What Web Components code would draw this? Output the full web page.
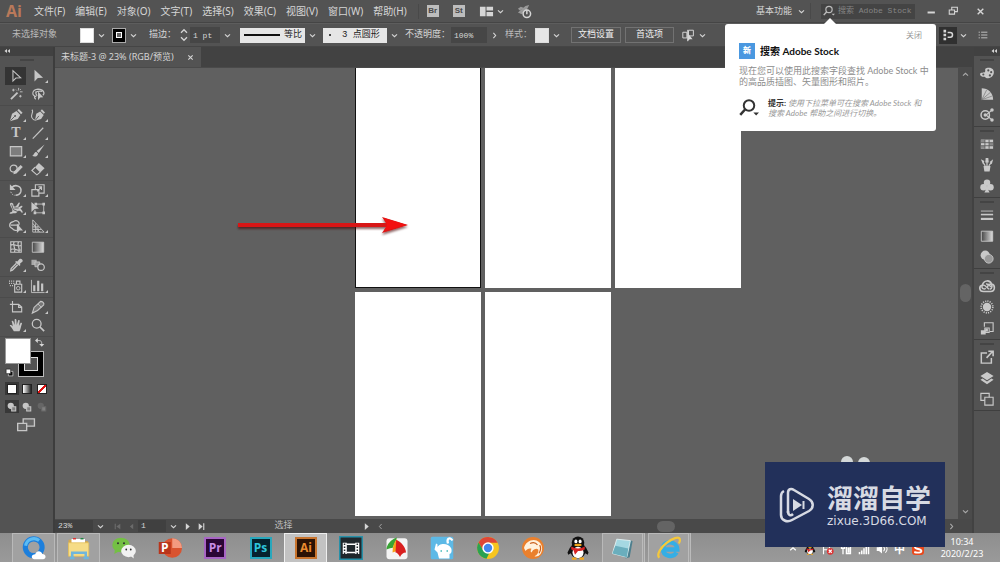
<!DOCTYPE html>
<html lang="zh-CN">
<head>
<meta charset="utf-8">
<title>未标题-3 @ 23% (RGB/预览)</title>
<style>
html,body{margin:0;height:100%;overflow:hidden;background:#535353}
body{font:10px/14px "Noto Sans","Noto Sans CJK SC",sans-serif;color:#d6d6d6}
</style>
</head>
<body>
<ai-workspace></ai-workspace>
<script>
const BASE = `
*{box-sizing:border-box}
button,select,input{font:inherit;color:inherit;border:0;background:none;padding:0;margin:0;border-radius:0;appearance:none;outline:0;min-width:0}
button{display:flex;align-items:center;justify-content:center;flex:none}
a{color:inherit;text-decoration:none}
`;
function define(name, css, html) {
  const t = document.createElement('template');
  t.innerHTML = `<style>${BASE}${css}</style>${html}`;
  customElements.define(name, class extends HTMLElement {
    constructor() {
      super();
      this.attachShadow({mode: 'open'}).append(t.content.cloneNode(true));
    }
  });
}

/* 16 x 16 glyphs; S = stroked */
const S = 'fill="none" stroke="currentColor"';
const ICONS = {
  down: `<path ${S} stroke-width="2" d="M3.500 6l4.500 4 4.500-4"/>`,
  right: `<path ${S} stroke-width="2" d="M6 3.500l4 4.500-4 4.500"/>`,
  left: `<path ${S} stroke-width="1.600" d="M10 3.500l-4 4.500 4 4.500"/>`,
  up: `<path ${S} stroke-width="2" d="M3.500 10l4.500-4 4.500 4"/>`,
  stepper: `<path ${S} stroke-width="1.700" d="M4 5l4-4 4 4M4 11l4 4 4-4"/>`,
  collapse: `<path d="M8 4v8L3 8zM14 4v8L9 8z"/>`,
  select: `<path ${S} stroke-width="1.200" d="M4.500 1.800v12l3.400-3.400 5.500-.4z"/>`,
  direct: `<path d="M4 .8v13.500l3.800-4.100 6-.2z"/>`,
  wand: `<path d="M1.500 13.200L9 5.700l1.500 1.500L3 14.700z"/><path ${S} d="M11 1v3M12.500 5.500h3M5 2v3M3.500 3.500h3M13 9v3M11.500 10.500h3M8 3l1 1M13.500 2.500l-1 1"/>`,
  lasso: `<path ${S} stroke-width="1.300" d="M6 11C0 10 1 3 8 2.500c7 0 8 5 5.500 7M5 6.500c2-2 5-2 8-1.500M4.500 10c-1 2-.5 3 1 4M6 5c-1 2 0 4 1 5"/><path d="M8 5v10l2.500-3 3.500-.3z"/>`,
  pen: `<path d="M1 15L3.500 6.500l5-3 4.500 4.500L10 12.500z"/><path d="M9.500 2.700l1.700-1.700L15.500 5.300 13.800 7z"/><path d="M1.500 14.500l5-5" stroke="#535353"/><circle cx="7" cy="9" r="1.100" fill="#535353"/>`,
  curve: `<path d="M4.500 14.500L6 6.500l4.500-2.500 4 4-3 4.500z"/><path d="M11 3l1.500-1.500L16 5l-1.500 1.500z"/><path ${S} stroke-width="1.200" d="M1 2c3 2-2 6 0 9 1 2 2 3 4 3"/><path d="M5 14l4-5" stroke="#535353"/>`,
  type: `<text x="8" y="13" text-anchor="middle" font-family="Liberation Serif" font-weight="bold" font-size="16">T</text>`,
  line: `<path ${S} stroke-width="1.300" d="M2 14.500L14 2"/>`,
  rect: `<path fill="#7d7d7d" stroke="currentColor" stroke-width="1.300" d="M1.500 3h13v10.500h-13z"/>`,
  brush: `<path d="M15.500.5L6.500 8l2.300 2.300zM6.200 9c-3 0-2 3-5 4.500 3 1.500 6 1 7-2.500z"/>`,
  shaper: `<circle ${S} stroke-width="1.400" cx="5.300" cy="7.500" r="4"/><path d="M5 14l1-3.500L13.300 3.500l2.400 2.300L8.500 13z"/>`,
  eraser: `<path d="M9 1L15.500 7l-5 5L4.500 6z"/><path ${S} stroke-width="1.300" d="M4.700 6L1 9.700l5.700 5 3.800-3.200"/>`,
  rotate: `<path ${S} stroke-width="1.700" d="M3 5.500C7 .5 15 4 13.500 10c-1 3-3 4-6 4"/><path d="M1 1.500V8h6.500z"/><path ${S} stroke-dasharray="1.500 1.500" d="M2 10c1 3 3 4 5 4"/>`,
  scale: `<path ${S} stroke-width="1.300" d="M1 7.500h8V15H1zM5 7V2h10v9.500H9.500M7 9.500l5-5M8.500 4.500H12V8"/>`,
  warp: `<path d="M1 3c1-2 4-1 4 1s1 3 3 2l3-4c1-1 2 0 1 1.500L10.500 7c2 0 3-2 4.500-1.500 1 .5 0 2-2 3 2 2 3 3 2.500 5-1 .5-2-2.500-4-2.500-2 0-2 3-5 3-3 0-4 1-5.500.5-1-.5 0-2 2-2 1-.5 1-2 .5-3.500C3 7 1 5 1 3z"/><path d="M3 4l2 6 5 2M6 8l5 0" fill="none" stroke="#535353"/>`,
  free: `<path d="M.5 1v11.500l3.500-3.500 5-.4z"/><path ${S} d="M5 3.500h9.500v10H4.500V10"/><path d="M4 2h3v3H4zM13 2h3v3h-3zM13 12h3v3h-3zM3 12h3v3H3z"/>`,
  builder: `<path ${S} stroke-width="1.300" d="M5 3c4-3 8 1 6 4s2 3 0 5-6 1-7-1C-1 9 0 4 5 3zM2 7h8"/><path d="M9 5v11l3-3h4z"/>`,
  persp: `<path ${S} d="M2 1v14h13zM2 5l8 10M2 9h6M5 5v10M2 12h10M8 8v7"/>`,
  mesh: `<path ${S} stroke-width="1.300" d="M2 2h12v12H2zM2 6c4-3 8 3 12 0M2 11c4-3 8 3 12 0M6 2c-3 4 3 8 0 12M11 2c-3 4 3 8 0 12"/>`,
  gradient: `<path fill="url(#g)" stroke="currentColor" d="M1.500 2.500h13v11.500h-13z"/>`,
  dropper: `<path d="M9.500 4l2.500-3c2-1 4.500 1 3.500 3l-3 2.500 .5 1.500-1 1L7 4.500l1-1z"/><path ${S} stroke-width="1.500" d="M8.500 6L2.500 12 2 14.500l2-.7L10 7.800"/>`,
  blend: `<path fill="#aaa" d="M.5 2h6v6h-6z"/><path fill="#999" stroke="currentColor" d="M4.500 4.500h5.500v5.500H4.500z"/><circle cx="11.500" cy="10.500" r="3.700" fill="#535353" stroke="currentColor" stroke-width="1.400"/>`,
  spray: `<path ${S} stroke-width="1.300" d="M6.500 6h8v9h-8zM8.500 6V2.500h4V6"/><circle ${S} cx="10.500" cy="10.500" r="2"/><path ${S} stroke-dasharray="1.200 1.200" stroke-width="1.500" d="M0 2.500h7M0 5h6M1 7.500h4"/>`,
  graph: `<path d="M2.500 7h2.500v7H2.500zM7 2h2.500v12H7zM11.500 5H14v9h-2.500z"/><path ${S} d="M.5 1v14.500h15"/>`,
  artboard: `<path ${S} stroke-width="1.300" d="M4 1v12.500h10.500V8L11 5H1M11 5v3.500h3.500"/>`,
  slice: `<path fill="#777" stroke="currentColor" stroke-width="1.300" d="M1.500 15l2-6.500L11 1.500c2 0 4.500 2 3.500 4L7.500 12z"/><path ${S} d="M8 4.500l4 4"/>`,
  hand: `<path d="M5.500 15C4 12 2 10 .8 8.500c1-1 2.500-.3 3.700 1.200L3 3.500c1-.8 1.800-.2 2.200.8L6.500 8 6.500 1.500c1-.8 1.900-.3 2 .8L8.800 8l1.700-5.500c1-.5 1.900.2 1.700 1L11.300 9l2-3.500c1-.4 1.800.3 1.500 1.200C13.500 10 13.500 13 12 15z"/>`,
  zoom: `<circle ${S} stroke-width="1.500" cx="6.500" cy="6.500" r="5"/><path ${S} stroke-width="2" d="M10 10l5 5"/>`,
  swap: `<path ${S} stroke-width="1.500" d="M4 4.500h3c4 0 5 2 5 6"/><path d="M0 4.500L5 0v9zM12 15.500L7.500 10.500h9z"/>`,
  defaults: `<path fill="#111" stroke="#fff" d="M6 6h8v8H6z"/><path fill="#fff" stroke="#111" d="M2 2h8v8H2z"/>`,
  mode: `<circle cx="6" cy="6" r="5"/><path fill="#808080" stroke="currentColor" stroke-width="1.700" d="M7.500 7.500H14V14.500H7.500z"/>`,
  screens: `<path fill="#666" stroke="currentColor" stroke-width="1.200" d="M5.500 2.500h10V9h-10z"/><path fill="#666" stroke="currentColor" stroke-width="1.200" d="M.6 6.500h8V13h-8z"/>`,
  palette: `<path d="M7 2.500c6-2 9.500 1.500 8.800 5.500S12 14 8 14c-2 0-1.500-1.500-3-1.700C2 12.500 0 11 0 9c.3-2 5-1 5.800-2.500.8-1.200-.8-3 1.200-4z"/><g fill="#535353"><circle cx="9.500" cy="5" r="1.200"/><circle cx="12.800" cy="7" r="1.200"/><circle cx="11.300" cy="10.800" r="1.300"/><circle cx="3.800" cy="9.700" r="1.200"/></g>`,
  guide: `<path d="M2 1.500c7 0 13 5 13 13H2z"/><path d="M2 14.500L12 6M2 14.500L7.500 3.500M2 14.500l11.500-4" stroke="#777" stroke-width=".8"/>`,
  themes: `<circle ${S} stroke-width="1.700" cx="6" cy="8" r="4.800"/><circle cx="6" cy="8" r="1.900"/><path ${S} stroke-width="1.300" d="M7 8l6-5M7 8l6 5"/><circle cx="13.700" cy="2.300" r="2"/><circle cx="13.700" cy="13.700" r="2"/>`,
  swatches: `<path d="M1 3h14v10.500H1z"/><path fill="#8b8b8b" d="M1 3h4.500v3.500H1zM10.500 6.500H15V10h-4.500zM1 10h4.500v3.500H1z"/><path fill="none" stroke="#5b5b5b" d="M1 6.500h14M1 10h14M5.600 3v10.500M10.400 3v10.500"/>`,
  brushes: `<path d="M4 9h8L11 15.500H5z"/><path ${S} stroke-width="1.400" d="M6 9L3.500 5M8 9V4M10 9l3-4"/><path d="M1 1.500l4 2-1.500 3.500zM6.500 0h3l.5 5H6zM15 1.500L11 4.500l2.500 2.500z"/>`,
  club: `<circle cx="8" cy="4.300" r="3.700"/><circle cx="4" cy="9.300" r="3.700"/><circle cx="12" cy="9.300" r="3.700"/><path d="M7 8h2c0 3 .5 5 2 7.500H5c1.500-2.500 2-4.500 2-7.500z"/>`,
  strokes: `<path ${S} d="M1 3.500h14"/><path ${S} stroke-width="1.800" d="M1 7.500h14"/><path ${S} stroke-width="2.500" d="M1 12.500h14"/>`,
  transp: `<circle cx="6" cy="6" r="5.300"/><circle cx="10" cy="10" r="5" fill="#999" stroke="currentColor"/>`,
  cloud: `<path ${S} stroke-width="1.600" d="M4.500 13.500C0 13.500-.5 8 3.500 7 4.500 2 11 1.500 12.500 6c4 .8 4 7.500-1 7.500z"/><path ${S} stroke-width="1.400" d="M10 11.300L5.800 7.500C4 6.500 2.500 8 3 9.500s2.500 2 3.700.7M7 6c2-.5 3 1 5 3M9 9.300c-1-1.500.5-3.300 2.200-3 2.500.5 2.500 4.500-.5 5"/>`,
  sun: `<circle cx="8" cy="8" r="4.800"/><circle ${S} stroke-width="1.800" stroke-dasharray="1.300 1.300" cx="8" cy="8" r="6.700"/>`,
  asset: `<path ${S} stroke-width="1.300" d="M5 6.500V2h10v10h-4"/><path ${S} stroke-width="1.200" d="M5.500 8h5v5h-5z"/><path d="M1 10.500h5.500v5H1zM6 8.500h3V12H6z"/>`,
  share: `<path ${S} stroke-width="1.700" d="M8 3.500H1.500V15H13V9"/><path ${S} stroke-width="1.800" d="M7.500 9L14 2M9.500 1.500h5.500V7"/>`,
  layers: `<path d="M8 1L15.500 5.700 8 10.500.500 5.700z"/><path d="M3 8.500L.500 10 8 15l7.500-5L13 8.500 8 12z"/>`,
  boards: `<path ${S} stroke-width="1.300" d="M1 1.500h9.500v8H1z"/><path fill="#535353" stroke="currentColor" stroke-width="1.300" d="M5.500 6H15v9H5.500z"/>`,
  arrange: `<path d="M1 3h6v10H1zM8 3h7v4H8zM8 8.500h7v4.500H8z"/>`,
  rocket: `<path fill="#999" d="M1 9L9 2l4-1-2 4-6 6zM1 5l3-2 3 1-4 3z"/><circle ${S} stroke-width="1.600" cx="10.500" cy="10.500" r="4"/><path ${S} stroke-width="1.600" d="M10.500 6v5"/>`,
  find: `<circle ${S} stroke-width="1.600" cx="8" cy="6" r="4.200"/><path ${S} stroke-width="2" d="M5 9l-4 4.500"/><path d="M11.500 11.500H16L13.700 14z"/>`,
  min: `<path d="M1 8h13v3.500H1z"/>`,
  restore: `<path ${S} stroke-width="1.700" d="M6 6V2h9v7h-4M2 6.500h8.500V13H2z"/>`,
  close: `<path ${S} stroke-width="2.500" d="M3 3l10 10M13 3L3 13"/>`,
  align: `<path ${S} stroke-width="1.200" d="M1 4h5v7H1zM8 1.500h6v7H8zM7 1v14"/><path d="M7 5v10l2.500-2.500H13z"/>`,
  snap: `<path d="M2 1h3.500v3.500H2zM2 6.300h3.500v3.500H2zM2 11.500h3.500V15H2z"/><path ${S} stroke-width="2" d="M7.500 4.500H11c4 0 4 6.500 0 6.500H7.500"/>`,
  list: `<path ${S} stroke-width="1.300" d="M5 3.500h10M5 8h10M5 12.500h10M1 3.500h2M1 8h2M1 12.500h2"/>`,
  first: `<path d="M3 3h2v10H3zM13 3v10L6 8z"/>`,
  prev: `<path d="M11 3v10L5 8z"/>`,
  next: `<path d="M5 2v12l7-6z"/>`,
  last: `<path d="M3 2v12l7-6zM11 2h2v12h-2z"/>`,

  qqb: `<circle cx="7.800" cy="7.500" r="5.600" fill="none" stroke="#1d7fdc" stroke-width="3.400"/><path fill="none" stroke="#5cbcf4" stroke-width="2" d="M2.400 6.500a5.600 5.600 0 0 1 9-3.500"/><path fill="#fff" d="M8 15.500c-2.300-.5-1.800-3.300.8-3.300.7-2.700 4-2.700 4.700-.2 2.700 0 3 3.200.5 3.500z"/>`,
  folder: `<path fill="#d8a94a" d="M1 2.500h5l1 1h7v9H1z"/><path fill="#fff" d="M3 2h9v4H3z"/><path fill="#f6dc86" stroke="#e3bd5a" stroke-width=".5" d="M1 4.500h13.500v9H1z"/><path fill="none" stroke="#6fb6dc" stroke-width="1.700" d="M3.500 14.500v-3.300h9v3.300M2 14.700h3M11 14.700h3.500"/><path stroke="#d33" d="M4 1.800h2"/><path stroke="#284" d="M9 1.800h2"/>`,
  wechat: `<ellipse cx="6" cy="6" rx="5.800" ry="4.900" fill="#74c044"/><path fill="#74c044" d="M2 9l-.5 3L5 10z"/><ellipse cx="11" cy="10" rx="4.900" ry="4.100" fill="#f2f2f2"/><path fill="#f2f2f2" d="M12 13l2.500 2-.3-3z"/><g fill="#333"><circle cx="4" cy="4.800" r=".7"/><circle cx="8" cy="4.800" r=".7"/><circle cx="9.500" cy="9" r=".6"/><circle cx="12.500" cy="9" r=".6"/></g>`,
  ppt: `<circle cx="9.500" cy="8" r="6.500" fill="#d9532f"/><path fill="#f39a80" d="M9.500 1.500A6.500 6.500 0 0 1 16 8H9.500z"/><path fill="#b9351b" d="M.5 4h8v8h-8z"/><text x="4.500" y="10.800" text-anchor="middle" font-family="Open Sans" font-weight="bold" font-size="8" fill="#fff">P</text>`,
  film: `<path fill="#20272c" stroke="#2690a8" d="M.5.5h15v15H.500z"/><path fill="#fff" d="M2.500 4.500h2.700v7.500H2.500zM10.800 4.500h2.700v7.500h-2.700z"/><path fill="none" stroke="#fff" d="M5 5.500h6M5 11h6"/><path fill="none" stroke="#20272c" stroke-dasharray="1 1" d="M3.700 5v7M12.200 5v7"/>`,
  fan: `<rect x="1" y="1.500" width="14" height="14" rx="2" fill="#f4f4f4"/><path fill="#39a435" d="M8 1C4 2 1 6 1 9c2-1 3-1 4-1 1-2 2-4 3-7z"/><path fill="#f7a219" d="M8 2C6 4 5 7 5 11l3-1z"/><path fill="#d91f1f" d="M7.500 2.500C11 4 14 8 14 11c-2 0-3 1-4 3-1-2-2-3-3-3z"/>`,
  rabbit: `<rect x=".5" y=".5" width="15" height="15" rx="1" fill="#5db9e6"/><path fill="#fff" d="M5 8c0-3 7-4 9 0 1 2 0 4-1 4v3H6l-1-4-2-2 1-4 1 .5z"/><path fill="none" stroke="#fff" stroke-width="1.500" d="M12 5c-1-3 1-5 3-2"/><path stroke="#4bb" d="M7 10h1M11 10h1"/>`,
  chrome: `<circle cx="8" cy="8" r="7.300" fill="#f7c51e"/><path fill="#de4637" d="M1.700 4.300a7.300 7.300 0 0 1 12.700.2H8L5 10z"/><path fill="#2aa152" d="M1.700 4.300l3.500 6L9 11l-2 4.200A7.300 7.300 0 0 1 1.700 4.300z"/><circle cx="8" cy="8" r="3.300" fill="#4386ef" stroke="#fff"/>`,
  lion: `<circle cx="8" cy="8" r="7.300" fill="#ea802d"/><path fill="#fff1dd" d="M2 8C3 3 9 1 12 4c2 1.500 3 5 1 8-1 1.500-3 2-4 1.500 2-1 3-3 2.500-4.500C10 8 9 9 8 9.500L7 11c-1-.5-.5-1.500 0-2.500C5 8 4 9 3 10z"/><path fill="none" stroke="#c9601f" stroke-width=".8" d="M6 5c2-1 4-.5 5 1M12.500 6c1 2 .5 4-.5 5.500"/>`,
  qq: `<ellipse cx="8" cy="9.500" rx="5.300" ry="5.500" fill="#111"/><circle cx="8" cy="4.500" r="4.200" fill="#111"/><ellipse cx="8" cy="11" rx="3.700" ry="3.800" fill="#fff"/><path fill="#111" d="M3 7l-2 4 .5 1.500L4 11zM13 7l2 4-.5 1.500L12 11z"/><path fill="#d72323" d="M3.500 7c3 1.700 6 1.700 9 0v2c-1.500.7-3 1-4.500 1l-2 2.500-1-3-1.500-.5z"/><ellipse cx="6.600" cy="3.600" rx="1" ry="1.300" fill="#fff"/><ellipse cx="9.400" cy="3.600" rx="1" ry="1.300" fill="#fff"/><ellipse cx="8" cy="6" rx="2.500" ry=".8" fill="#f4a81b"/><path stroke="#f4a81b" stroke-width="1.500" d="M4 15h3M9 15h3"/>`,
  note: `<path fill="#4d7f8e" d="M13 2l2 1-2 11-3 1z"/><path fill="#a5d8e2" stroke="#e6f3f5" stroke-width=".6" d="M4 1.500l9.500 1L11 14 1 11.500z"/><path fill="#6aaebd" d="M3 6l9 2-1 6-10-2.500z"/>`,
  ie: `<path fill="none" stroke="#35aee5" stroke-width="3" d="M4 9h9.500c0-6-9.500-6.500-9.500-.5 0 5.500 7 6 9 2.500"/><path fill="none" stroke="#f5c83b" stroke-width="1.500" d="M1.500 14.500c-2-2 1-7 5-10 4-3 8-4.300 8.700-2.500.3 1 0 2-.6 3"/>`,
  flag: `<path stroke="#fff" stroke-width="1.500" fill="none" d="M2 1v14M2 3h8v6H2"/><circle cx="11" cy="11" r="4.500" fill="#d33"/><path stroke="#fff" stroke-width="1.500" d="M9 9l4 4M13 9l-4 4"/>`,
  power: `<path fill="none" stroke="#fff" stroke-width="1.700" d="M2 2v5h4V2M4 7v8M8.500 3.500H14V14H8.500z"/><path fill="#fff" d="M10 6h3v7h-3z"/>`,
  signal: `<path fill="#fff" d="M1 12h2v3H1zM4 10h2v5H4zM7 7h2v8H7zM10 4h2v11h-2zM13 1h2v14h-2z"/>`,
  sound: `<path fill="#fff" d="M1 5.500h3L8 2v12L4 10.500H1z"/><path fill="none" stroke="#fff" stroke-width="1.400" d="M10 5c2 2 2 4 0 6M12.500 3c3 3 3 7 0 10"/>`,
  sogou: `<rect width="16" height="16" rx="4" fill="#e8481c"/><path fill="none" stroke="#fff" stroke-width="2.500" d="M13 4C9 2 4 3 4 5.500S12.500 8 12.500 10.500 7 13.500 3 12"/>`
};
customElements.define('ai-icon', class extends HTMLElement {
  constructor() { super(); this.attachShadow({mode: 'open'}); }
  connectedCallback() {
    const s = this.getAttribute('size') || 14;
    this.shadowRoot.innerHTML = `<style>:host{display:block;flex:none;width:${s}px;height:${s}px}svg{display:block;fill:currentColor;overflow:visible}</style>
    <svg width="${s}" height="${s}" viewBox="0 0 16 16" aria-hidden="true"><defs><linearGradient id="g"><stop stop-color="#444"/><stop offset="1" stop-color="#ddd"/></linearGradient></defs>${ICONS[this.getAttribute('name')] || ''}</svg>`;
  }
});

define('ai-menu-bar', `
:host{display:flex;align-items:center;height:23px;background:#535353;border-bottom:1px solid #454545;overflow:hidden}
.logo{font:bold 16px/20px "Open Sans",sans-serif;color:#b9795a;width:34px;padding-left:6px}
nav{display:flex;gap:10px;white-space:nowrap}
.apps{display:flex;align-items:center;margin-left:11px;padding-left:8px;border-left:1px solid #494949}
.app{width:12px;height:12px;background:#bdbdbd;color:#4a4a4a;font:bold 8px/12px "Liberation Sans",sans-serif;margin-right:14px}
.right{display:flex;align-items:center;margin-left:auto}
.ws{width:37px;font-size:9px}
.rule{height:16px;border-left:1px solid #494949;margin:0 10px 0 4px}
label{display:flex;align-items:center;background:#444;width:94px;height:15px;padding-left:2px;color:#bbb}
input{flex:1;font:8px/14px "Liberation Mono","Noto Sans CJK SC",monospace;margin-left:3px}
input::placeholder{color:#858585;opacity:1}
.win{width:24px}
`, `
<span class="logo">Ai</span>
<nav><a href="#">文件(F)</a><a href="#">编辑(E)</a><a href="#">对象(O)</a><a href="#">文字(T)</a><a href="#">选择(S)</a><a href="#">效果(C)</a><a href="#">视图(V)</a><a href="#">窗口(W)</a><a href="#">帮助(H)</a></nav>
<div class="apps"><button class="app">Br</button><button class="app">St</button>
<button aria-label="排列文档"><ai-icon name="arrange" size="15"></ai-icon></button><button aria-label="更多" style="margin:0 12px 0 2px"><ai-icon name="down" size="9"></ai-icon></button><button aria-label="GPU"><ai-icon name="rocket" size="15"></ai-icon></button></div>
<div class="right"><select class="ws" aria-label="工作区"><option>基本功能</option></select><ai-icon name="down" size="9" style="margin-left:4px"></ai-icon><span class="rule"></span>
<label><ai-icon name="find" size="12"></ai-icon><input aria-label="搜索" placeholder="搜索 Adobe Stock"></label>
<button class="win" style="margin-left:4px" aria-label="最小化"><ai-icon name="min" size="9"></ai-icon></button><button class="win" style="width:20px" aria-label="还原"><ai-icon name="restore" size="10"></ai-icon></button><button class="win" style="width:34px;margin-right:3px" aria-label="关闭"><ai-icon name="close" size="9"></ai-icon></button></div>
`);

define('ai-control-bar', `
:host{display:flex;align-items:center;gap:4px;height:24px;padding-left:12px;background:#535353;border-top:1px solid #5d5d5d;border-bottom:1px solid #454545;font:9px/14px "Liberation Mono","Noto Sans CJK SC",monospace;white-space:nowrap;overflow:hidden}
.f{display:flex;align-items:center;flex:none}
.c{width:14px;height:15px}
.sw{width:14px;height:15px;background:#fff;border:1px solid #ddd}
.sw.k{background:#000;border-color:#aaa}
.sw.k i{width:6px;height:6px;border:1px solid #fff;background:#666}
.in{background:#464646;height:16px;padding-left:3px;font-size:8px}
.lt{background:#e6e6e6;color:#222;height:15px;font-size:9px}
.btn{border:1px solid #727272;height:16px;color:#eee}
.ln{width:36px;height:2px;background:#111;margin-left:4px}
.dot{width:2px;height:2px;border-radius:1px;background:#111;margin-left:6px}
`, `
<span style="width:64px;color:#bbb">未选择对象</span>
<div class="f"><button class="sw" aria-label="填色"></button><button class="c" aria-label="填色选项"><ai-icon name="down" size="9"></ai-icon></button></div>
<div class="f"><button class="sw k" aria-label="描边颜色"><i></i></button><button class="c" aria-label="描边选项"><ai-icon name="down" size="9"></ai-icon></button></div>
<label for="w" style="width:30px;padding-left:5px">描边：</label>
<div class="f"><button aria-label="增减" style="width:12px"><ai-icon name="stepper" size="12"></ai-icon></button><input id="w" class="in" style="width:30px" value="1 pt"><button class="c" aria-label="粗细"><ai-icon name="down" size="9"></ai-icon></button></div>
<div class="f" style="margin-left:2px"><span class="f lt"><span class="ln"></span><select aria-label="变量宽度" style="width:25px;padding-left:4px"><option>等比</option></select></span><button class="c" aria-label="宽度配置"><ai-icon name="down" size="9"></ai-icon></button></div>
<div class="f"><span class="f lt"><span class="dot"></span><select aria-label="画笔" style="width:56px;padding-left:11px"><option>3 点圆形</option></select></span><button class="c" aria-label="画笔定义"><ai-icon name="down" size="9"></ai-icon></button></div>
<label for="o" style="width:42px">不透明度：</label>
<div class="f"><input id="o" class="in" style="width:36px" value="100%"><button class="c" aria-label="不透明度选项"><ai-icon name="right" size="9"></ai-icon></button></div>
<span style="width:26px;color:#bbb">样式：</span>
<div class="f"><button class="sw" style="background:#e6e6e6" aria-label="样式"></button><button class="c" aria-label="样式选项"><ai-icon name="down" size="9"></ai-icon></button></div>
<button class="btn" style="width:50px;margin-left:4px">文档设置</button><button class="btn" style="width:49px">首选项</button>
<div class="f" style="margin-left:4px"><button aria-label="对齐"><ai-icon name="align" size="13"></ai-icon></button><button class="c" aria-label="对齐选项"><ai-icon name="down" size="9"></ai-icon></button></div>
<div class="f" style="margin-left:auto;padding-right:12px"><button aria-label="贴靠" style="width:18px;height:17px;background:#303030"><ai-icon name="snap" size="12"></ai-icon></button><button aria-label="贴靠选项" style="width:12px"><ai-icon name="down" size="9"></ai-icon></button><button aria-label="面板菜单" style="margin-left:9px"><ai-icon name="list" size="10"></ai-icon></button></div>
`);

define('ai-tool', `
:host{display:block}
button{width:21px;height:18px;color:#c6c6c6;position:relative}
:host([on]) button{background:#343434}
:host([more]) button::after{content:"";position:absolute;right:0;bottom:2px;border-left:3px solid transparent;border-bottom:3px solid #c6c6c6}
`, `<button aria-label="工具"><slot></slot></button>`);

const TOOLS = [['select on','direct','wand -','lasso -'],['pen','curve','type','line','rect','brush','shaper','eraser'],['rotate','scale','warp','free -','builder','persp'],['mesh -','gradient -','dropper','blend -'],['spray','graph'],['artboard -','slice','hand','zoom -']];
const toolHtml = TOOLS.map(g => `<div class="grp">${g.map(t => {
  const [n, f] = t.split(' ');
  return `<ai-tool ${f === 'on' ? 'on' : f === '-' ? '' : 'more'}><ai-icon name="${n}" size="14"></ai-icon></ai-tool>`;
}).join('')}</div>`).join('');

define('ai-toolbox', `
:host{display:flex;flex-direction:column;background:#535353;border-right:2px solid #3d3d3d}
.head{height:9px;flex:none;background:#414141;padding-left:3px}
.grip{width:14px;height:2px;background:#444;margin:3px auto 6px;flex:none}
.grp{display:grid;grid-template-columns:21px 21px;column-gap:1px;padding:0 0 2px 5px;border-bottom:1px solid #4b4b4b}
.fill{display:grid;grid-template:repeat(3,13px)/13px 13px 13px;margin:1px 0 0 5px}
.fg{grid-area:1/1/3/3;background:#fff;border:1px solid #999;z-index:1}
.st{grid-area:2/2/4/4;background:#000;border:1px solid #bbb}
.st i{width:14px;height:14px;background:#535353;border:1px solid #ddd}
.sp{grid-area:1/3;align-self:start;justify-self:end}
.df{grid-area:3/1;align-self:end;justify-self:start}
.row{display:flex;gap:1px;margin:5px 0 0 5px;color:#c6c6c6}
.row button{width:14px;height:13px}
.row i{width:10px;height:10px;border:1px solid #222;background:#fff}
.on{background:#383838}
`, `
<div class="head"><ai-icon name="collapse" size="8"></ai-icon></div><div class="grip"></div>${toolHtml}
<div class="fill"><button class="fg" aria-label="填色"></button><button class="st" aria-label="描边"><i></i></button><button class="sp" aria-label="互换"><ai-icon name="swap" size="9"></ai-icon></button><button class="df" aria-label="默认"><ai-icon name="defaults" size="9"></ai-icon></button></div>
<div class="row"><button class="on" aria-label="颜色"><i></i></button><button aria-label="渐变"><i style="background:linear-gradient(90deg,#fff,#222)"></i></button><button aria-label="无"><i style="background:linear-gradient(135deg,#fff 40%,#d11 40%,#d11 60%,#fff 60%)"></i></button></div>
<div class="row"><button class="on" aria-label="正常绘图"><ai-icon name="mode" size="10"></ai-icon></button><button aria-label="背面绘图"><ai-icon name="mode" size="10"></ai-icon></button><button style="color:#666" aria-label="内部绘图"><ai-icon name="mode" size="10"></ai-icon></button></div>
<div class="row" style="padding-left:12px"><button style="width:18px" aria-label="屏幕模式"><ai-icon name="screens" size="18"></ai-icon></button></div>
`);

const PANELS = [['palette','guide','themes'],['swatches','brushes','club'],['strokes','gradient','transp'],['cloud','sun','asset'],['share','layers','boards']];
define('ai-panel-dock', `
:host{display:flex;flex-direction:column;background:#535353;border-left:2px solid #424242}
.head{height:9px;flex:none;background:#414141;display:flex;justify-content:flex-end;padding-right:2px}
.g{display:flex;flex-direction:column;align-items:center;padding:6px 0 1px;border-bottom:1px solid #3f3f3f;background:linear-gradient(#444,#444) 50% 3px/14px 2px no-repeat}
.g button{height:21px;width:24px;color:#c9c9c9}
`, `<div class="head"><ai-icon name="collapse" size="8"></ai-icon></div>${PANELS.map(g => `<div class="g">${g.map(n => `<button aria-label="${n}"><ai-icon name="${n}" size="${n === 'cloud' ? 16 : 14}"></ai-icon></button>`).join('')}</div>`).join('')}`);

define('ai-document', `
:host{display:grid;grid-template:20px minmax(0,1fr) 14px/minmax(0,1fr) 14px;background:#606060}
.tabs{grid-column:1/3;background:#424242;display:flex}
.tab{display:flex;align-items:center;gap:13px;background:#535353;padding:0 7px 0 6px;white-space:nowrap;font-size:9px}
.canvas{display:grid;grid-template:220px 224px/126px 126px 126px;gap:4px;justify-content:start;padding-left:300px;overflow:hidden;position:relative;border-top:1px solid #4a4a4a}
.board{background:#fff}
.act{border:solid #111;border-width:0 1px 1px}
.arrow{position:absolute;left:180px;top:145px}
.mascot{position:absolute;right:88px;bottom:53px;display:flex;gap:5px;align-items:end}
.mascot i{width:12px;height:10px;border-radius:6px 6px 0 0;background:#d4d8d8}
.v{background:#4b4b4b;display:flex;flex-direction:column;align-items:center;justify-content:space-between;padding:3px 0;color:#aaa}
.thumb{width:11px;height:18px;border-radius:6px;background:#646464}
.foot{grid-column:1/3;display:flex;align-items:center;background:#494949;font:8px/12px "Liberation Mono","Noto Sans CJK SC",monospace;min-width:0}
.foot select{background:#404040;height:12px;padding-left:3px}
.c{width:14px;height:12px}
.hint{width:151px;text-align:center;color:#bbb;font-size:9px}
.h{display:flex;flex:1;align-items:center;justify-content:space-between;padding:0 16px 0 3px;color:#aaa;min-width:0}
`, `
<div class="tabs"><div class="tab"><span>未标题-3 @ 23% (RGB/预览)</span><button aria-label="关闭标签"><ai-icon name="close" size="7"></ai-icon></button></div></div>
<div class="canvas"><div class="board act"></div><div class="board"></div><div class="board"></div><div class="board"></div><div class="board"></div>
<svg class="arrow" width="180" height="24"><defs><filter id="s" x="-5%" y="-50%" width="110%" height="220%"><feDropShadow dx="0" dy="2" stdDeviation="1" flood-color="#400" flood-opacity=".6"/></filter></defs><path filter="url(#s)" fill="#d81414" d="M3 10h148l-4-6 26 8-26 8 4-6H3z"/><path fill="#f21010" d="M149 5l23 7-23 6 3-6z"/></svg>
<div class="mascot"><i></i><i style="height:9px"></i></div></div>
<div class="v"><ai-icon name="up" size="9"></ai-icon><span class="thumb"></span><ai-icon name="down" size="9"></ai-icon></div>
<div class="foot"><select aria-label="缩放" style="width:38px"><option>23%</option></select><button class="c" aria-label="缩放级别"><ai-icon name="down" size="9"></ai-icon></button>
<button class="c" style="margin-left:3px;color:#6b6b6b" aria-label="首项"><ai-icon name="first" size="9"></ai-icon></button><button class="c" style="color:#6b6b6b" aria-label="上一项"><ai-icon name="prev" size="9"></ai-icon></button>
<select aria-label="画板" style="width:28px"><option>1</option></select><button class="c" aria-label="画板导航"><ai-icon name="down" size="9"></ai-icon></button><button class="c" aria-label="下一项"><ai-icon name="next" size="9"></ai-icon></button><button class="c" aria-label="末项"><ai-icon name="last" size="9"></ai-icon></button>
<span class="hint">选择</span><button class="c" aria-label="状态"><ai-icon name="next" size="9"></ai-icon></button>
<div class="h"><ai-icon name="left" size="9"></ai-icon><span class="thumb" style="width:18px;height:11px"></span><ai-icon name="right" size="9"></ai-icon></div></div>
`);

define('ai-stock-tip', `
:host{display:block;background:#fff;border-radius:3px;color:#8c8c8c;padding:5px 14px 12px;font-family:Lato,"Noto Sans CJK SC",sans-serif;white-space:nowrap}
:host::before{content:"";position:absolute;left:99px;top:-6px;border:6px solid transparent;border-top:0;border-bottom-color:#fff}
.x{display:block;margin-left:auto;font-size:8px;line-height:12px;color:#999}
h2{display:flex;align-items:center;gap:5px;margin:2px 0 6px;font-size:10px;line-height:16px;color:#111}
h2 b{width:16px;height:16px;background:#4a98e0;color:#fff;font-size:8px;line-height:15px;text-align:center}
p{margin:0;font-size:9px;line-height:11px}
.t{display:flex;gap:9px;margin-top:11px}
.t p{font-size:8px;line-height:10px;font-style:italic;color:#999}
strong{font-style:normal;color:#333}
.t ai-icon{color:#333}
`, `<button class="x">关闭</button><h2><b>新</b>搜索 Adobe Stock</h2>
<p>现在您可以使用此搜索字段查找 Adobe Stock 中<br>的高品质插图、矢量图形和照片。</p>
<div class="t"><ai-icon name="find" size="20"></ai-icon><p><strong>提示:</strong> 使用下拉菜单可在搜索 Adobe Stock 和<br>搜索 Adobe 帮助之间进行切换。</p></div>`);

define('site-mark', `
:host{display:flex;align-items:center;gap:13px;background:#22305a;color:#d7dae3;width:180px;height:85px;padding-left:14px;white-space:nowrap}
b{display:block;font:bold 26px/30px "Noto Sans CJK SC",sans-serif}
span{display:block;font:12px/14px "DejaVu Sans",sans-serif;margin-top:2px}
`, `<svg width="35" height="36" viewBox="0 0 35 36" fill="none" stroke="currentColor" stroke-width="2.500" aria-hidden="true"><path d="M9 26V6c0-4 3-5 6-3l15 9c5 3 5 9 0 12L13 33c-5 3-11 0-11-5V9c0-2 1-4 3-5"/><path d="M9 24c0 5 3 5 5 3"/><path fill="currentColor" stroke="none" d="M14 12l9 6-9 6z"/><path stroke-width="2" d="M24.500 14v8"/></svg>
<div><b>溜溜自学</b><span>zixue.3D66.COM</span></div>`);

const APPS = ['qqb*','folder*','wechat','ppt','Pr','Ps','Ai','film','fan','rabbit','chrome','lion','qq'];
const appHtml = APPS.map(a => a.length === 2 && a !== 'qq'
  ? `<button class="${a}"><span>${a}</span></button>`
  : `<button class="${a.endsWith('*') ? 'open' : ''}" aria-label="${a}"><ai-icon name="${a.replace('*','')}" size="24"></ai-icon></button>`).join('');
define('task-bar', `
:host{display:flex;height:29px;background:linear-gradient(#8e8e8e,#9a9a9a);padding-left:12px;color:#fff;overflow:hidden}
.apps{display:flex;justify-content:space-between;width:588px;flex:none}
button{width:43px;height:29px;border:1px solid transparent;border-bottom:0}
.open{border-color:#b9b9b9;background:#a1a1a1}
.stack{border-right:3px double #bbb}
button span{width:22px;height:22px;font:bold 12px/18px "Open Sans",sans-serif;border:2px solid;text-align:center}
.Pr span{background:#2a0535;color:#c78be6;border-color:#a765c4}
.Ps span{background:#06222e;color:#2ec4dc;border-color:#28a7bc}
.Ai{background:#c2c2c2;border-color:#eee}
.Ai span{background:#2b1204;color:#e88a2e;border-color:#c8742e}
.tray{display:flex;margin-left:auto;align-items:center;gap:6px;padding-top:3px}
.tray b{font-size:11px;line-height:12px;width:12px}
.clock{font-size:9px;line-height:12px;text-align:center;width:76px;padding-top:3px}
`, `<div class="apps">${appHtml}</div>
<button class="open stack" style="margin-left:2px" aria-label="记事本"><ai-icon name="note" size="23"></ai-icon></button><button class="open stack" style="margin-left:3px" aria-label="浏览器"><ai-icon name="ie" size="24"></ai-icon></button>
<div class="tray"><ai-icon name="up" size="10"></ai-icon><ai-icon name="qq" size="12"></ai-icon><ai-icon name="flag" size="12"></ai-icon><ai-icon name="power" size="12"></ai-icon><ai-icon name="signal" size="12"></ai-icon><ai-icon name="sound" size="12"></ai-icon><b>中</b><ai-icon name="sogou" size="12"></ai-icon></div>
<div class="clock">10:34<br>2020/2/23</div>`);

define('ai-workspace', `
:host{display:grid;grid-template-rows:23px 24px minmax(0,1fr) 29px;height:100vh;position:relative;overflow:hidden}
main{display:grid;grid-template-columns:55px minmax(0,1fr) 28px;min-height:0}
main>*{min-height:0;overflow:hidden}
ai-stock-tip{position:absolute;right:64px;top:24px;width:211px;height:107px}
site-mark{position:absolute;right:55px;bottom:15px}
`, `<ai-menu-bar></ai-menu-bar><ai-control-bar></ai-control-bar>
<main><ai-toolbox></ai-toolbox><ai-document></ai-document><ai-panel-dock></ai-panel-dock></main>
<task-bar></task-bar><ai-stock-tip></ai-stock-tip><site-mark></site-mark>`);
</script>
</body>
</html>
